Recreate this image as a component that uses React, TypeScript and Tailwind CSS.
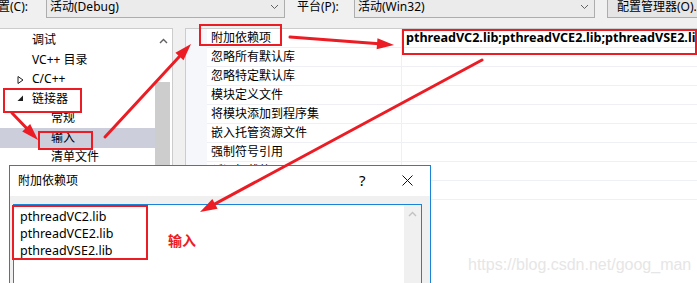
import React from "react";

const RED = "#ec1c24";

function Arrow({ x1, y1, x2, y2, len = 17, hw = 5.5 }: { x1: number; y1: number; x2: number; y2: number; len?: number; hw?: number }) {
  const dx = x2 - x1;
  const dy = y2 - y1;
  const L = Math.hypot(dx, dy);
  const ux = dx / L;
  const uy = dy / L;
  const bx = x2 - ux * len;
  const by = y2 - uy * len;
  const nx = -uy;
  const ny = ux;
  const pts = `${x2},${y2} ${bx + nx * hw},${by + ny * hw} ${bx - nx * hw},${by - ny * hw}`;
  return (
    <g>
      <line x1={x1} y1={y1} x2={bx + ux * 2} y2={by + uy * 2} stroke={RED} strokeWidth={3} strokeLinecap="round" />
      <polygon points={pts} fill={RED} />
    </g>
  );
}

const treeItems: { label: string; level: number; icon?: "closed" | "open"; selected?: boolean }[] = [
  { label: "调试", level: 1 },
  { label: "VC++ 目录", level: 1 },
  { label: "C/C++", level: 1, icon: "closed" },
  { label: "链接器", level: 1, icon: "open" },
  { label: "常规", level: 2 },
  { label: "输入", level: 2, selected: true },
  { label: "清单文件", level: 2 },
  { label: "调试", level: 2 },
  { label: "系统", level: 2 },
];

const props = [
  "附加依赖项",
  "忽略所有默认库",
  "忽略特定默认库",
  "模块定义文件",
  "将模块添加到程序集",
  "嵌入托管资源文件",
  "强制符号引用",
  "延迟加载的 DLL",
  "程序集链接资源",
];

function Chevron({ color = "#606060" }: { color?: string }) {
  return (
    <svg width="9" height="6" viewBox="0 0 9 6">
      <polyline points="1,5 4.5,1.5 8,5" fill="none" stroke={color} strokeWidth="1.4" />
    </svg>
  );
}

function Down() {
  return (
    <svg width="9" height="6" viewBox="0 0 9 6">
      <polyline points="1,1 4.5,4.5 8,1" fill="none" stroke="#606060" strokeWidth="1" />
    </svg>
  );
}

export default function App() {
  return (
    <div
      className="relative w-[697px] h-[283px] overflow-hidden bg-[#f0f0f0] text-[12px] text-black"
      style={{ fontFamily: "'Noto Sans','Noto Sans CJK SC',sans-serif" }}
    >
      {/* top bar */}
      <div className="flex h-[18px] items-end">
        <div className="shrink-0 w-[46px] h-[22px] flex items-center -ml-[2px] leading-none">置(C):</div>
        <div className="shrink-0 ml-[2px] w-[239px] h-[22px] border border-[#adadad] bg-[#ebebeb] flex items-center justify-between pl-[3px] pr-[5px] leading-none">
          <span>活动(Debug)</span>
          <Down />
        </div>
        <div className="shrink-0 ml-[12px] w-[57px] h-[22px] flex items-center leading-none">平台(P):</div>
        <div className="shrink-0 w-[241px] h-[22px] border border-[#adadad] bg-[#ebebeb] flex items-center justify-between pl-[3px] pr-[5px] leading-none">
          <span>活动(Win32)</span>
          <Down />
        </div>
        <div className="shrink-0 ml-[12px] w-[100px] h-[22px] border border-[#adadad] bg-[#e5e5e5] flex items-center pl-[9px] leading-none whitespace-nowrap">
          配置管理器(O)...
        </div>
      </div>

      {/* main */}
      <div className="mt-[10px] flex h-[255px]">
        {/* tree */}
        <div className="shrink-0 w-[173px] border-t border-r border-[#cccccc] bg-white flex">
          <div className="flex-1 pt-[1.5px]">
            {treeItems.map((it, i) => (
              <div
                key={i}
                className={`h-[19.5px] flex items-center relative leading-none whitespace-nowrap ${it.selected ? "bg-[#cccedb]" : ""}`}
                style={{ paddingLeft: it.level === 1 ? 32 : 51 }}
              >
                {it.icon === "closed" && (
                  <svg className="absolute left-[17px] top-[6px]" width="7" height="8" viewBox="0 0 7 8">
                    <polygon points="1,0.5 6,4 1,7.5" fill="white" stroke="#1e1e1e" strokeWidth="1" />
                  </svg>
                )}
                {it.icon === "open" && (
                  <svg className="absolute left-[17px] top-[6px]" width="7" height="7" viewBox="0 0 7 7">
                    <polygon points="6,0.5 6,6 0.5,6" fill="#1e1e1e" />
                  </svg>
                )}
                {it.label}
              </div>
            ))}
          </div>
          <div className="w-[17px] flex flex-col items-center">
            <div className="h-[24px] flex items-center justify-center">
              <Chevron />
            </div>
            <div className="mt-[29px] w-[15px] self-start flex-1 bg-[#cdcdcd]" />
          </div>
        </div>

        {/* property grid */}
        <div className="ml-[12px] flex-1 min-w-0 border-t border-l border-[#cccccc] bg-white">
          {props.map((p, i) => (
            <div key={i} className="h-[19px] flex">
              <div className="shrink-0 w-[21px] bg-[#f5f7fa]" />
              <div className="shrink-0 w-[195px] border-b border-r border-[#eef0f5] pl-[4px] flex items-center leading-none whitespace-nowrap">
                {p}
              </div>
              <div className="flex-1 min-w-0 border-b border-[#eef0f5] pl-[4px] flex items-center leading-none whitespace-nowrap overflow-hidden font-bold text-[12.6px]">
                {i === 0 ? "pthreadVC2.lib;pthreadVCE2.lib;pthreadVSE2.lib" : ""}
              </div>
            </div>
          ))}
        </div>
      </div>

      {/* dialog window */}
      <div className="absolute left-[9px] top-[165px] w-[422px] h-[130px] border border-[#1883d7] bg-[#f0f0f0] flex flex-col">
        <div className="h-[30px] bg-white flex items-center pl-[8px] leading-none relative">
          <span>附加依赖项</span>
          <span className="absolute left-[349px] top-[7px] text-[15px] leading-none">?</span>
          <svg className="absolute left-[392px] top-[9px]" width="11" height="11" viewBox="0 0 11 11">
            <line x1="0.5" y1="0.5" x2="10.5" y2="10.5" stroke="#111" strokeWidth="1" />
            <line x1="10.5" y1="0.5" x2="0.5" y2="10.5" stroke="#111" strokeWidth="1" />
          </svg>
        </div>
        <div className="mt-[8px] ml-[3px] w-[409px] flex-1 border border-[#1883d7] bg-white flex">
          <div className="flex-1 pl-[6px] pt-[3px] leading-[17px] text-[12.5px]">
            <div>pthreadVC2.lib</div>
            <div>pthreadVCE2.lib</div>
            <div>pthreadVSE2.lib</div>
          </div>
          <div className="w-[17px] bg-[#f0f0f0] flex justify-center pt-[6px]">
            <Chevron color="#c2c2c2" />
          </div>
        </div>
      </div>

      {/* watermark */}
      <div
        className="absolute left-[468px] top-[255px] text-[16px] leading-[20px] text-[#e6e6e6] whitespace-nowrap"
        style={{ fontFamily: "'Liberation Sans',Arial,sans-serif" }}
      >
        https://blog.csdn.net/goog_man
      </div>

      {/* red label */}
      <div className="absolute left-[168px] top-[231px] text-[14px] leading-[18px] font-bold" style={{ color: RED, fontFamily: "'Noto Sans CJK SC',sans-serif" }}>
        输入
      </div>

      {/* annotations */}
      <svg className="absolute inset-0 pointer-events-none" width="697" height="283" viewBox="0 0 697 283">
        <rect x="4" y="89" width="77" height="23" fill="none" stroke={RED} strokeWidth="2" />
        <rect x="39" y="132" width="53" height="17" fill="none" stroke={RED} strokeWidth="2" />
        <rect x="200" y="25" width="81" height="20" fill="none" stroke={RED} strokeWidth="2" />
        <rect x="403" y="30" width="293" height="24" fill="none" stroke={RED} strokeWidth="2" />
        <rect x="13" y="206" width="134" height="53" fill="none" stroke={RED} strokeWidth="2" />
        <Arrow x1={12} y1={113} x2={38} y2={140} />
        <Arrow x1={105} y1={137} x2={191} y2={44} />
        <Arrow x1={290} y1={37} x2={394} y2={45} />
        <Arrow x1={482} y1={60} x2={200} y2={212} />
      </svg>
    </div>
  );
}
